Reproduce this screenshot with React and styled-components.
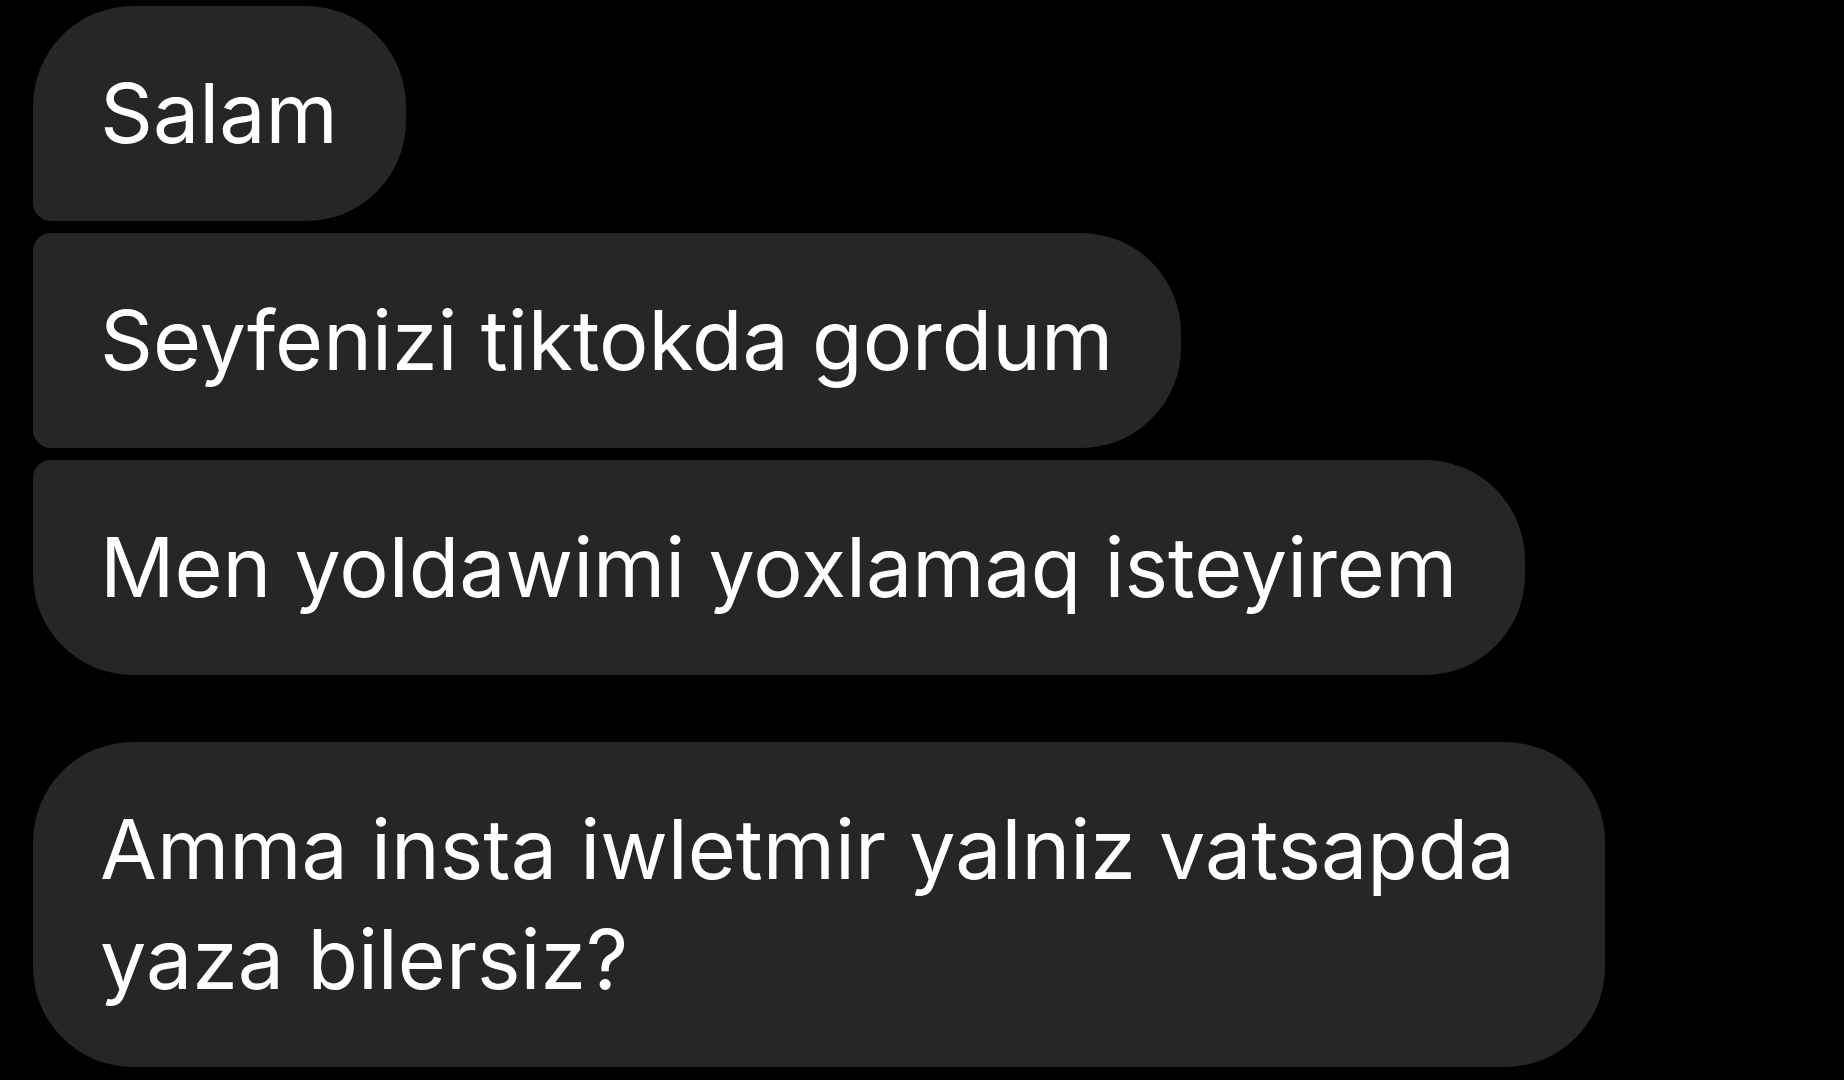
import React from "react";
import styled, { createGlobalStyle, css } from "styled-components";

const Global = createGlobalStyle`
  html, body {
    margin: 0;
    padding: 0;
    background: #000;
  }
  body {
    width: 1844px;
    height: 1080px;
    overflow: hidden;
  }
`;

const Thread = styled.div`
  display: flex;
  flex-direction: column;
  align-items: flex-start;
  padding: 6px 0 0 33px;
  background: #000;
  min-height: 1080px;
  box-sizing: border-box;
`;

const Group = styled.div`
  display: flex;
  flex-direction: column;
  align-items: flex-start;
  gap: 12px;
  & + & {
    margin-top: 67px;
  }
`;

const BIG = 100;
const SMALL = 18;

const Bubble = styled.div`
  box-sizing: border-box;
  max-width: 1572px;
  padding: 52px 68px 53px 67px;
  background: #262626;
  color: #ffffff;
  font-family: "Inter", "Liberation Sans", Arial, sans-serif;
  font-size: 82.5px;
  line-height: 110px;
  letter-spacing: 0;
  ${({ $pos }) => {
    const tl = $pos === "first" || $pos === "single" ? BIG : SMALL;
    const bl = $pos === "last" || $pos === "single" ? BIG : SMALL;
    return css`
      border-radius: ${tl}px ${BIG}px ${BIG}px ${bl}px;
    `;
  }}
  ${({ $pos }) =>
    $pos === "single" &&
    css`
      padding-right: 56px;
    `}
`;

const groups = [
  ["Salam", "Seyfenizi tiktokda gordum", "Men yoldawimi yoxlamaq isteyirem"],
  ["Amma insta iwletmir yalniz vatsapda yaza bilersiz?"],
];

function position(i, n) {
  if (n === 1) return "single";
  if (i === 0) return "first";
  if (i === n - 1) return "last";
  return "middle";
}

export default function App() {
  return (
    <>
      <Global />
      <Thread>
        {groups.map((g, gi) => (
          <Group key={gi}>
            {g.map((m, i) => (
              <Bubble key={i} $pos={position(i, g.length)}>
                {m}
              </Bubble>
            ))}
          </Group>
        ))}
      </Thread>
    </>
  );
}
